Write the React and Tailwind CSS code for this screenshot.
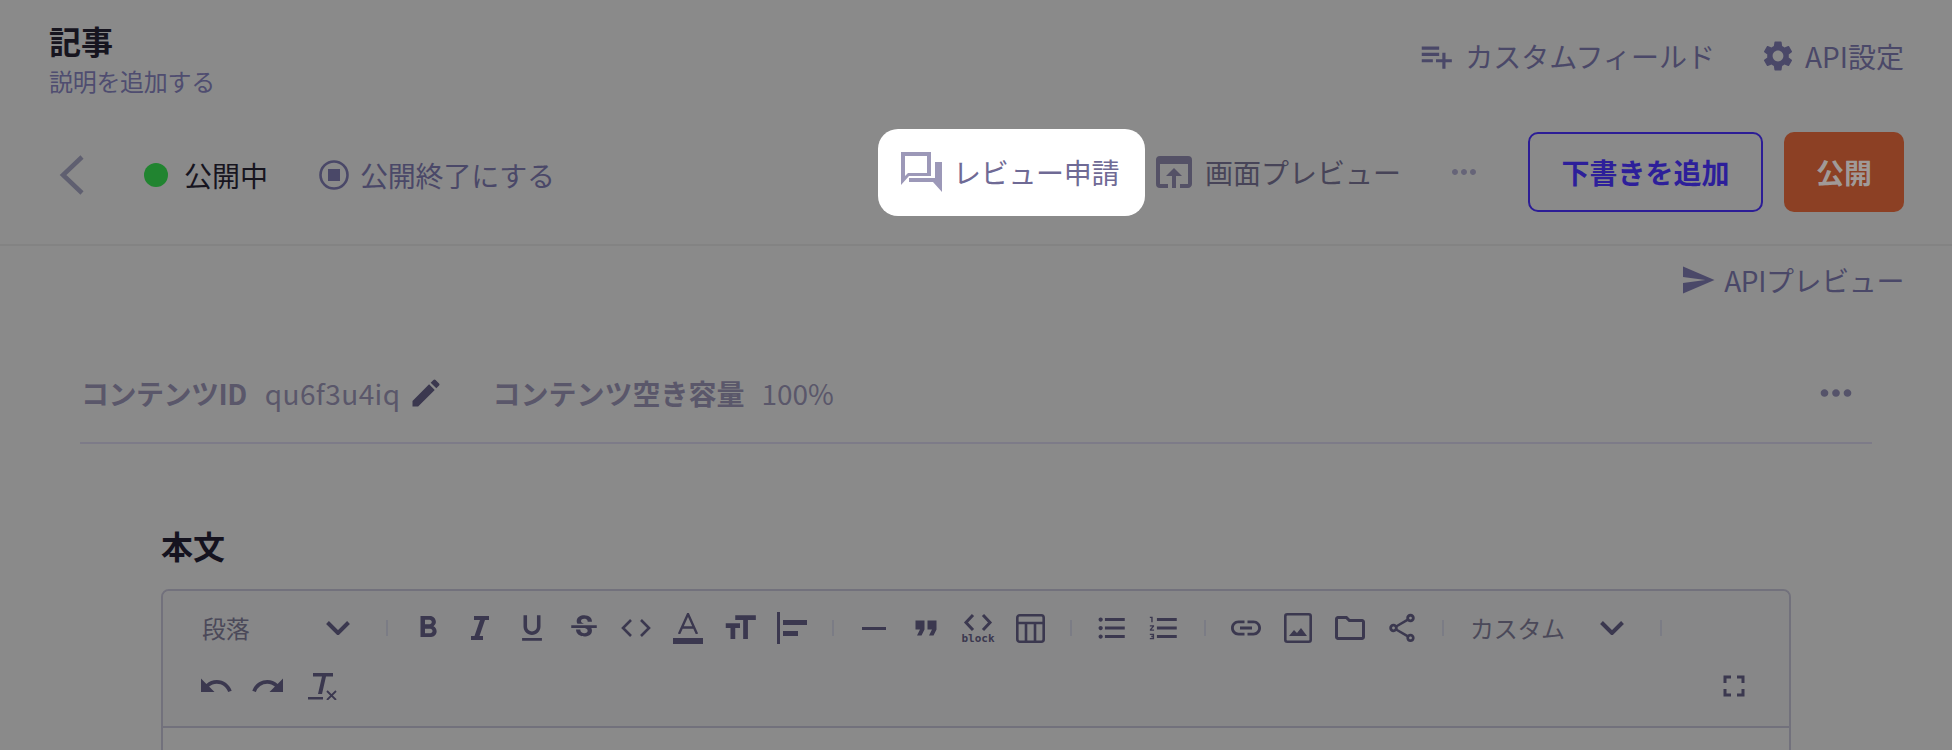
import {
  MdPlaylistAdd,
  MdSettings,
  MdSend,
  MdEdit,
  MdMoreHoriz,
  MdFormatBold,
  MdFormatUnderlined,
  MdStrikethroughS,
  MdFormatSize,
  MdFormatQuote,
  MdFormatListBulleted,
  MdFormatListNumbered,
  MdLink,
  MdOutlineFolder,
  MdOutlineShare,
  MdUndo,
  MdRedo,
  MdFullscreen,
  MdOpenInBrowser,
} from "react-icons/md";

const font = "font-['Noto_Sans_CJK_JP','Noto_Sans',sans-serif]";

function Sep() {
  return (
    <div className="w-[30px] flex justify-center">
      <div className="w-[2px] h-[16px] bg-[#7b7c85]" />
    </div>
  );
}

function Slot({ children }) {
  return <div className="w-[52px] h-[58px] flex items-center justify-center text-[#3b384f]">{children}</div>;
}

function Select({ label, width }) {
  return (
    <div className={`${width} h-[58px] flex items-center justify-between pl-[12px] pr-[22px] text-[#4b4959]`}>
      <span className="text-[24px] tracking-[-0.3px]">{label}</span>
      <svg width="24" height="14" viewBox="0 0 24 14" fill="none" stroke="#3b384f" strokeWidth="4">
        <path d="M1.500 1.500L12 12L22.500 1.500" />
      </svg>
    </div>
  );
}

function ChatIcon() {
  return (
    <svg width="41" height="40" viewBox="0 0 41 40" fill="none">
      <path d="M0 0H30V24H8L0 33Z M4 4V24L7 21H26V4Z" fill="#9c98b8" fillRule="evenodd" />
      <path d="M34 10H41V40L32 30H8V26H34Z" fill="#9c98b8" />
    </svg>
  );
}

function StopIcon() {
  return (
    <svg width="30" height="30" viewBox="0 0 30 30" fill="none">
      <circle cx="15" cy="15" r="13.5" stroke="#4a4868" strokeWidth="2.6" />
      <rect x="9" y="9" width="12" height="12" fill="#4a4868" />
    </svg>
  );
}

function AlignIcon() {
  return (
    <svg width="30" height="32" viewBox="0 0 30 32" fill="#3b384f">
      <rect x="0" y="0" width="3" height="32" />
      <rect x="6" y="8" width="24" height="5" />
      <rect x="6" y="19" width="15" height="5" />
    </svg>
  );
}

function CodeIcon() {
  return (
    <svg width="30" height="20" viewBox="0 0 30 20" fill="none" stroke="#3b384f" strokeWidth="2.6">
      <path d="M10 2L2 10L10 18" />
      <path d="M20 2L28 10L20 18" />
    </svg>
  );
}

function ItalicIcon() {
  return (
    <svg width="18" height="24" viewBox="0 0 18 24" fill="#3b384f">
      <path d="M3 0H18V4H14L8.500 20H12V24H0V20H3.500L9 4H3Z" />
    </svg>
  );
}

function ColorIcon() {
  return (
    <div className="flex flex-col items-center w-[30px]">
      <svg width="20" height="21" viewBox="0 0 20 21" fill="none" stroke="#3b384f" strokeWidth="2.400">
        <path d="M1 21L10 1L19 21M4 14.500H16" />
      </svg>
      <div className="w-[30px] h-[6px] bg-[#3b384f] mt-[4px]" />
    </div>
  );
}

function BlockIcon() {
  return (
    <div className="flex flex-col items-center">
      <svg width="30" height="19" viewBox="0 0 30 19" fill="none" stroke="#3b384f" strokeWidth="3">
        <path d="M10 2L3 9.500L10 17" />
        <path d="M20 2L27 9.500L20 17" />
      </svg>
      <span className="font-['DejaVu_Sans_Mono',monospace] text-[11px] leading-[11px] font-bold mt-[1px] text-[#3b384f]">block</span>
    </div>
  );
}

function TableIcon() {
  return (
    <svg width="29" height="29" viewBox="0 0 29 29" fill="none" stroke="#3b384f" strokeWidth="2.6">
      <rect x="1.300" y="1.300" width="26.400" height="26.400" rx="2.500" />
      <path d="M1 9H28M10 9V28M19 9V28" />
    </svg>
  );
}

function ImageIcon() {
  return (
    <svg width="28" height="30" viewBox="0 0 28 30">
      <rect x="1.300" y="1.300" width="25.400" height="27.400" rx="2" fill="none" stroke="#3b384f" strokeWidth="2.600" />
      <path d="M5 23L10 17L13 20L17 15L23 23Z" fill="#3b384f" />
    </svg>
  );
}

function ClearIcon() {
  return (
    <svg width="29" height="27" viewBox="0 0 29 27" className="ml-[4px]">
      <path d="M5 0H25V3.500H18L14 21H10L14 3.500H5Z" fill="#3b384f" />
      <rect x="0" y="24" width="15" height="2.500" fill="#3b384f" />
      <path d="M19 18L28 27M28 18L19 27" stroke="#3b384f" strokeWidth="1.800" />
    </svg>
  );
}

export default function App() {
  return (
    <div className={`${font} w-[1952px] h-[750px] overflow-hidden bg-[#8a8a8a] flex flex-col`}>
      {/* header */}
      <div className="h-[246px] shrink-0 border-b-2 border-[#838383] pl-[50px] pr-[48px]">
        <div className="h-[126px] flex justify-between">
          <div className="pt-[17px] -ml-[1px]">
            <h1 className="text-[32px] leading-[46px] font-bold text-[#17151f]">記事</h1>
            <p className="text-[24px] leading-[34px] mt-[1px] tracking-[-0.3px] text-[#4f4d70]">説明を追加する</p>
          </div>
          <div className="flex items-center h-[112px] text-[#4a4868]">
            <MdPlaylistAdd size={38} />
            <span className="text-[28px] ml-[10px]">カスタムフィールド</span>
            <MdSettings size={36} className="ml-[45px]" />
            <span className="text-[28px] ml-[9px]">API設定</span>
          </div>
        </div>
        <div className="flex items-center h-[92px]">
          <div className="flex items-center pt-[6px]">
            <svg width="26" height="40" viewBox="0 0 26 40" fill="none" stroke="#5f5f70" strokeWidth="4.500" className="ml-[9px]">
              <path d="M23 2L4 20L23 38" />
            </svg>
            <div className="w-[24px] h-[24px] rounded-full bg-[#218430] ml-[59px]" />
            <span className="text-[28px] ml-[16px] text-[#17151f]">公開中</span>
            <div className="ml-[51px]"><StopIcon /></div>
            <span className="text-[28px] ml-[11px] tracking-[-0.2px] text-[#4a4868]">公開終了にする</span>
          </div>

          <div className="ml-auto flex items-center">
            <div className="w-[267px] h-[87px] bg-white rounded-[20px] flex items-center pl-[23px]">
              <ChatIcon />
              <span className="text-[28px] ml-[11px] tracking-[-0.3px] text-[#6f6a95]">レビュー申請</span>
            </div>
            <MdOpenInBrowser size={48} className="ml-[5px] text-[#545166]" />
            <span className="text-[28px] ml-[7px] text-[#474458]">画面プレビュー</span>
            <MdMoreHoriz size={36} className="ml-[45px] text-[#666478]" />
            <button className="ml-[46px] w-[235px] h-[80px] rounded-[10px] border-2 border-[#2c1d96] text-[28px] font-bold text-[#2d1f9a]">
              下書きを追加
            </button>
            <button className="ml-[21px] w-[120px] h-[80px] rounded-[10px] bg-[#8c4024] text-[28px] font-bold text-[#a09a98]">
              公開
            </button>
          </div>
        </div>
      </div>

      {/* api preview */}
      <div className="h-[68px] shrink-0 pr-[48px] flex items-center justify-end gap-[8px] text-[#4a4868]">
        <MdSend size={36} />
        <span className="text-[28px] tracking-[-0.4px]">APIプレビュー</span>
      </div>

      {/* content meta */}
      <div className="mx-[80px] h-[130px] shrink-0 pt-[30px] border-b-2 border-[#7d7b88] flex items-center text-[#5a576a] text-[28px]">
        <span className="font-bold ml-[1px] tracking-[-0.5px]">コンテンツID</span>
        <span className="ml-[18px] tracking-[0.4px]">qu6f3u4iq</span>
        <MdEdit size={36} className="ml-[8px] text-[#3b384f]" />
        <span className="font-bold ml-[48px]">コンテンツ空き容量</span>
        <span className="ml-[17px]">100%</span>
        <MdMoreHoriz size={46} className="ml-auto mr-[13px] text-[#55536a]" />
      </div>

      {/* editor */}
      <div className="pl-[161px] shrink-0">
        <h2 className="mt-[81px] text-[32px] leading-[40px] font-bold text-[#15131f]">本文</h2>
        <div className="mt-[24px] w-[1630px] h-[240px] border-2 border-[#72717c] rounded-t-[8px]">
          <div className="bg-[#878788] rounded-t-[6px] border-b-2 border-[#72717c] pl-[27px] pt-[8px] pb-[10px] h-[137px]">
            <div className="flex items-center h-[58px]">
              <Select label="段落" width="w-[182px]" />
              <Sep />
              <Slot><MdFormatBold size={36} /></Slot>
              <Slot><ItalicIcon /></Slot>
              <Slot><MdFormatUnderlined size={34} /></Slot>
              <Slot><MdStrikethroughS size={34} /></Slot>
              <Slot><CodeIcon /></Slot>
              <Slot><ColorIcon /></Slot>
              <Slot><MdFormatSize size={38} /></Slot>
              <Slot><AlignIcon /></Slot>
              <Sep />
              <Slot><div className="w-[24px] h-[3px] bg-[#3b384f]" /></Slot>
              <Slot><MdFormatQuote size={36} /></Slot>
              <Slot><BlockIcon /></Slot>
              <Slot><TableIcon /></Slot>
              <Sep />
              <Slot><MdFormatListBulleted size={34} /></Slot>
              <Slot><MdFormatListNumbered size={34} /></Slot>
              <Sep />
              <Slot><MdLink size={36} /></Slot>
              <Slot><ImageIcon /></Slot>
              <Slot><MdOutlineFolder size={36} /></Slot>
              <Slot><MdOutlineShare size={34} /></Slot>
              <Sep />
              <Select label="カスタム" width="w-[188px]" />
              <Sep />
            </div>
            <div className="flex items-center h-[58px] pr-[29px]">
              <Slot><MdUndo size={36} /></Slot>
              <Slot><MdRedo size={36} /></Slot>
              <Slot><ClearIcon /></Slot>
              <div className="ml-auto"><Slot><MdFullscreen size={36} /></Slot></div>
            </div>
          </div>
        </div>
      </div>
    </div>
  );
}
